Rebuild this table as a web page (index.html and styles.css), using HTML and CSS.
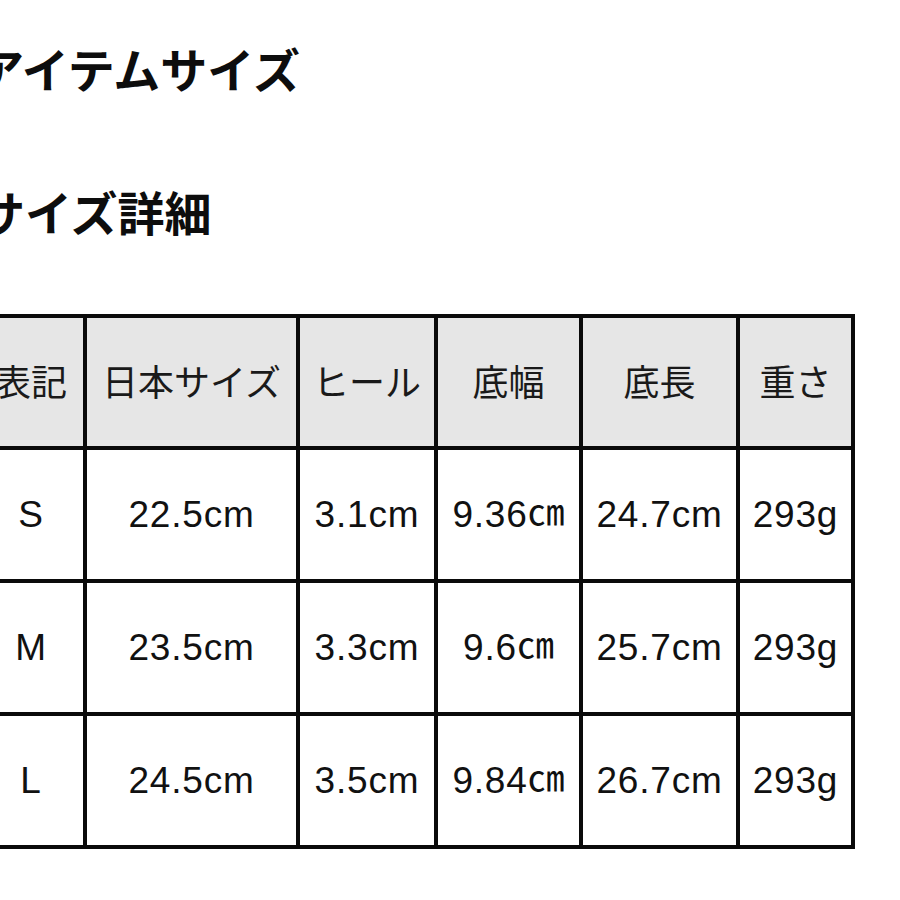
FILE: index.html
```html
<!DOCTYPE html>
<html lang="ja">
<head>
<meta charset="utf-8">
<title>サイズ詳細</title>
<link rel="stylesheet" href="styles.css">
</head>
<body>
<main class="page">
  <h2 class="title title-item">アイテムサイズ</h2>
  <h2 class="title title-detail">サイズ詳細</h2>
  <table class="size-table">
    <colgroup>
      <col class="c1"><col class="c2"><col class="c3"><col class="c4"><col class="c5"><col class="c6">
    </colgroup>
    <thead>
      <tr>
        <th>表記</th>
        <th>日本サイズ</th>
        <th>ヒール</th>
        <th>底幅</th>
        <th>底長</th>
        <th>重さ</th>
      </tr>
    </thead>
    <tbody>
      <tr>
        <td>S</td><td>22.5cm</td><td>3.1cm</td><td>9.36<span class="unit">㎝</span></td><td>24.7cm</td><td>293g</td>
      </tr>
      <tr>
        <td>M</td><td>23.5cm</td><td>3.3cm</td><td>9.6<span class="unit">㎝</span></td><td>25.7cm</td><td>293g</td>
      </tr>
      <tr>
        <td>L</td><td>24.5cm</td><td>3.5cm</td><td>9.84<span class="unit">㎝</span></td><td>26.7cm</td><td>293g</td>
      </tr>
    </tbody>
  </table>
</main>
</body>
</html>
```
FILE: styles.css
```css
html, body {
  margin: 0;
  padding: 0;
  background: #ffffff;
}

body {
  overflow: hidden;
  font-family: "Noto Sans CJK JP", "Noto Sans", sans-serif;
  color: #111111;
}

.page {
  margin-left: -23px;
  padding-top: 44px;
}

.title {
  margin: 0;
  font-size: 47px;
  line-height: 47px;
  font-weight: 700;
  white-space: nowrap;
  color: #0d0d0d;
}

.title-detail {
  margin-top: 96px;
  margin-left: 1px;
}

.size-table {
  margin-top: 80px;
  margin-left: -2px;
  border-collapse: collapse;
  table-layout: fixed;
  width: 876px;
}

.c1 { width: 108px; }
.c2 { width: 213px; }
.c3 { width: 138px; }
.c4 { width: 145px; }
.c5 { width: 157px; }
.c6 { width: 115px; }

.size-table th,
.size-table td {
  border: 4px solid #0a0a0a;
  padding: 0;
  text-align: center;
  vertical-align: middle;
  white-space: nowrap;
}

.size-table th {
  box-sizing: border-box;
  height: 132px;
  padding-bottom: 4px;
  background: #e6e6e6;
  font-family: "Noto Sans CJK JP", sans-serif;
  font-weight: 400;
  font-size: 36px;
  line-height: 36px;
  color: #1a1a1a;
}

.size-table td {
  height: 129px;
  font-family: "Liberation Sans", "Noto Sans CJK JP", sans-serif;
  font-size: 37px;
  line-height: 42px;
  letter-spacing: 0.8px;
  color: #111111;
}

.unit {
  font-family: "Noto Sans CJK JP", sans-serif;
  line-height: 0;
  position: relative;
  top: -1px;
  letter-spacing: 0;
}
```
